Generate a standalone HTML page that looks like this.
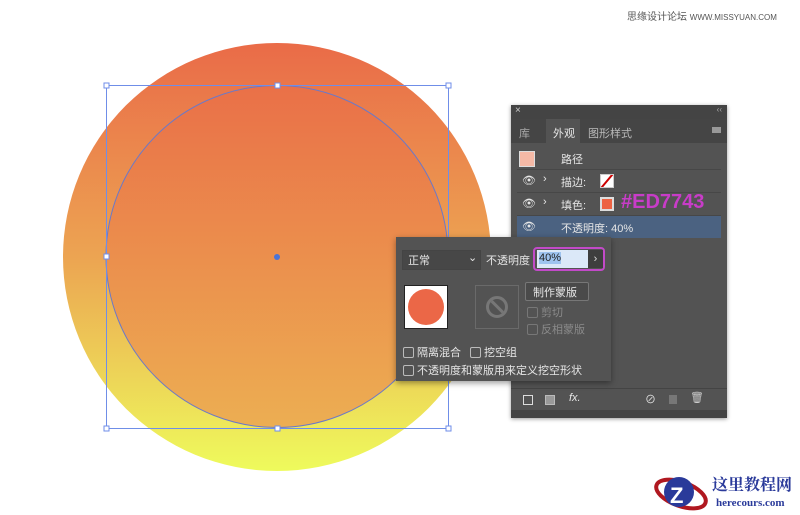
<!DOCTYPE html>
<html><head><meta charset="utf-8"><style>
body{margin:0;width:800px;height:515px;background:#fff;position:relative;overflow:hidden;font-family:"Liberation Sans","Noto Sans CJK SC",sans-serif}
.abs{position:absolute;white-space:nowrap}
.t{color:#e6e6e6;font-size:11px}
.row{position:absolute;left:6px;width:204px;height:22px;border-bottom:1px solid #474747}
.cb{position:absolute;width:9px;height:9px;border:1px solid #bbb;border-radius:2px}
</style></head><body>
<div class="abs" style="left:627px;top:8px;font-size:10px;color:#555">思缘设计论坛 <span style="font-size:8px">WWW.MISSYUAN.COM</span></div>
<svg class="abs" style="left:0;top:0" width="800" height="515">
<defs>
<linearGradient id="g1" x1="0" y1="0" x2="0" y2="1"><stop offset="0" stop-color="#ea6b48"/><stop offset=".5" stop-color="#eca452"/><stop offset="1" stop-color="#eefb5c"/></linearGradient>
<linearGradient id="g2" x1="0" y1="0" x2="0" y2="1"><stop offset="0" stop-color="#ea7048"/><stop offset="1" stop-color="#ecae52"/></linearGradient>
</defs>
<circle cx="277" cy="257" r="214" fill="url(#g1)"/>
<circle cx="277" cy="256.5" r="171" fill="url(#g2)" stroke="#6b79c8" stroke-width="1"/>
<rect x="106.5" y="85.5" width="342" height="343" fill="none" stroke="#6f8ee8"/>
<g fill="#fff" stroke="#6f8ee8">
<rect x="104" y="83" width="5" height="5"/><rect x="275" y="83" width="5" height="5"/><rect x="446" y="83" width="5" height="5"/>
<rect x="104" y="254" width="5" height="5"/><rect x="104" y="426" width="5" height="5"/><rect x="275" y="426" width="5" height="5"/><rect x="446" y="426" width="5" height="5"/>
</g>
<circle cx="277" cy="257" r="3" fill="#4a74d8"/>
</svg>
<div class="abs" style="left:511px;top:105px;width:216px;height:313px;background:#535353;box-shadow:0 1px 4px rgba(0,0,0,.4)">
<div class="abs" style="left:0;top:0;width:216px;height:14px;background:#444"></div>
<div class="abs t" style="left:4px;top:0;font-size:10px;color:#ccc">×</div>
<div class="abs t" style="right:5px;top:0;font-size:8px;color:#aaa">‹‹</div>
<div class="abs" style="left:0;top:14px;width:216px;height:24px;background:#454545"></div>
<div class="abs t" style="left:8px;top:20px;color:#aaa">库</div>
<div class="abs" style="left:35px;top:14px;width:34px;height:24px;background:#535353"></div>
<div class="abs t" style="left:42px;top:20px">外观</div>
<div class="abs t" style="left:77px;top:20px;color:#bbb">图形样式</div>
<div class="abs" style="left:201px;top:22px;width:9px;height:6px;background:#999"></div>
<div class="row" style="top:42px"><div class="abs" style="left:2px;top:4px;width:14px;height:14px;background:#f5b9a6;border:1px solid #ddd"></div><div class="abs t" style="left:44px;top:4px">路径</div></div>
<div class="row" style="top:65px"><div class="abs t" style="left:5px;top:4px">👁</div><div class="abs t" style="left:26px;top:3px">›</div><div class="abs t" style="left:44px;top:4px">描边:</div><div class="abs" style="left:83px;top:4px;width:12px;height:12px;background:#fff;border:1px solid #ccc;overflow:hidden"><div style="position:absolute;left:5px;top:-3px;width:2px;height:18px;background:#c00;transform:rotate(40deg)"></div></div></div>
<div class="row" style="top:88px"><div class="abs t" style="left:5px;top:4px">👁</div><div class="abs t" style="left:26px;top:3px">›</div><div class="abs t" style="left:44px;top:4px">填色:</div><div class="abs" style="left:83px;top:4px;width:10px;height:10px;background:#ed6343;border:2px solid #ddd"></div><div class="abs" style="left:104px;top:-2px;font-size:20px;font-weight:bold;color:#c83cc8">#ED7743</div></div>
<div class="abs" style="left:6px;top:111px;width:204px;height:22px;background:#4b6281"></div>
<div class="abs t" style="left:11px;top:115px">👁</div><div class="abs t" style="left:50px;top:115px">不透明度: 40%</div>
<div class="abs" style="left:0;top:283px;width:216px;height:1px;background:#444"></div>
<div class="abs" style="left:12px;top:290px;width:8px;height:8px;border:1.5px solid #ddd"></div>
<div class="abs" style="left:34px;top:290px;width:8px;height:8px;border:1.5px solid #bbb;background:#999"></div>
<div class="abs t" style="left:58px;top:287px;font-style:italic">fx.</div>
<div class="abs t" style="left:134px;top:286px">⊘</div>
<div class="abs" style="left:158px;top:290px;width:8px;height:9px;background:#777"></div>
<div class="abs t" style="left:179px;top:286px;color:#ccc">🗑</div>
<div class="abs" style="left:0;top:305px;width:216px;height:8px;background:#444"></div>
</div>
<div class="abs" style="left:396px;top:237px;width:215px;height:144px;background:#535353;box-shadow:0 2px 6px rgba(0,0,0,.4)">
<div class="abs" style="left:6px;top:13px;width:77px;height:18px;background:#474747;border:1px solid #444"></div>
<div class="abs t" style="left:12px;top:15px">正常</div><div class="abs t" style="left:72px;top:14px">⌄</div>
<div class="abs t" style="left:90px;top:15px">不透明度</div>
<div class="abs" style="left:137px;top:10px;width:72px;height:24px;border:2px solid #c24ac8;border-radius:4px;box-sizing:border-box"></div>
<div class="abs" style="left:141px;top:13px;width:51px;height:18px;background:#dbe8f8"></div>
<div class="abs" style="left:143px;top:15px;font-size:11px;background:#9ec3ef;color:#222">40%</div>
<div class="abs" style="left:192px;top:13px;width:15px;height:18px;background:#3e3e3e;color:#ddd;font-size:11px;text-align:center;line-height:18px">›</div>
<div class="abs" style="left:8px;top:48px;width:42px;height:42px;background:#fff;border:1px solid #222"><div style="margin:3px;width:36px;height:36px;border-radius:50%;background:#eb6747"></div></div>
<div class="abs" style="left:79px;top:48px;width:42px;height:42px;border:1px solid #6a6a6a"><div style="margin:10px;width:16px;height:16px;border:3px solid #777;border-radius:50%;position:relative;overflow:hidden"><div style="position:absolute;left:7px;top:-4px;width:3px;height:24px;background:#777;transform:rotate(-45deg)"></div></div></div>
<div class="abs" style="left:129px;top:45px;width:62px;height:17px;border:1px solid #777;border-radius:2px;background:#4a4a4a"></div>
<div class="abs t" style="left:137px;top:47px">制作蒙版</div>
<div class="cb" style="left:131px;top:70px;border-color:#777"></div><div class="abs t" style="left:145px;top:67px;color:#8a8a8a">剪切</div>
<div class="cb" style="left:131px;top:87px;border-color:#777"></div><div class="abs t" style="left:145px;top:84px;color:#8a8a8a">反相蒙版</div>
<div class="cb" style="left:7px;top:110px"></div><div class="abs t" style="left:21px;top:107px">隔离混合</div>
<div class="cb" style="left:74px;top:110px"></div><div class="abs t" style="left:88px;top:107px">挖空组</div>
<div class="cb" style="left:7px;top:128px"></div><div class="abs t" style="left:21px;top:125px">不透明度和蒙版用来定义挖空形状</div>
</div>
<svg class="abs" style="left:652px;top:474px" width="58" height="40">
<ellipse cx="29" cy="20" rx="26" ry="12" fill="none" stroke="#b01820" stroke-width="4" transform="rotate(20 29 20)"/>
<circle cx="27" cy="18" r="15" fill="#2a3a9a"/>
<text x="18" y="29" font-size="22" font-weight="bold" fill="#fff" font-family="Liberation Sans">Z</text>
</svg>
<div class="abs" style="left:712px;top:474px;font-size:16px;font-weight:bold;color:#2a3a9a;font-family:'Noto Serif CJK SC',serif;line-height:20px">这里教程网</div>
<div class="abs" style="left:716px;top:497px;font-size:11px;font-weight:bold;color:#2a3a9a;font-family:'Liberation Serif',serif">herecours.com</div>
</body></html>
